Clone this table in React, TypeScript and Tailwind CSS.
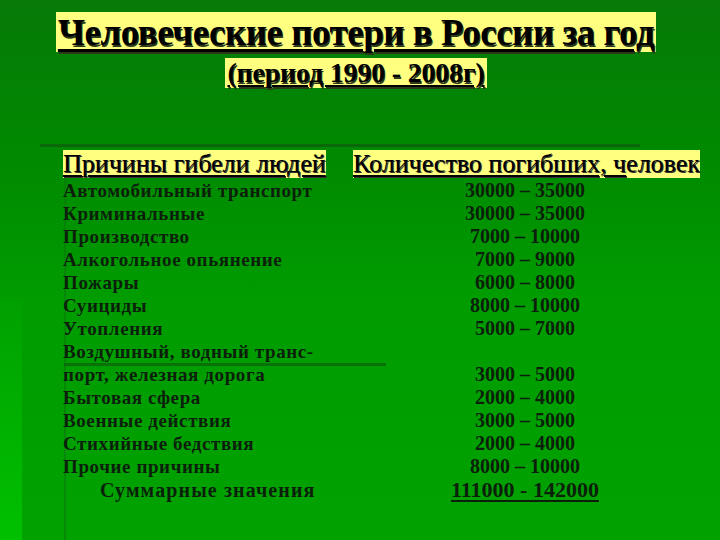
import React from "react";

const causes = [
  "Автомобильный транспорт",
  "Криминальные",
  "Производство",
  "Алкогольное опьянение",
  "Пожары",
  "Суициды",
  "Утопления",
  "Воздушный, водный транс-",
  "порт, железная дорога",
  "Бытовая сфера",
  "Военные действия",
  "Стихийные бедствия",
  "Прочие причины",
];

const numbers = [
  "30000 – 35000",
  "30000 – 35000",
  "7000 – 10000",
  "7000 – 9000",
  "6000 – 8000",
  "8000 – 10000",
  "5000 – 7000",
  "",
  "3000 – 5000",
  "2000 – 4000",
  "3000 – 5000",
  "2000 – 4000",
  "8000 – 10000",
];

export default function App() {
  return (
    <div
      className="relative w-[720px] h-[540px] overflow-hidden bg-[linear-gradient(180deg,#077a07_0%,#008a00_30%,#009c00_55%,#00a200_100%)] text-[#0b1f0b]"
      style={{ fontFamily: '"Liberation Serif", "Times New Roman", serif' }}
    >
      <div className="absolute left-0 top-[300px] w-[22px] h-[240px] bg-[linear-gradient(180deg,#00a000,#00c000)]" />
      <div className="absolute left-[64px] top-[150px] w-[2px] h-[390px] bg-[#0a7a0a] opacity-60" />
      <div className="absolute left-[40px] top-[144px] w-[600px] h-[3px] bg-[#0b600b] opacity-80" />
      <div className="absolute left-[64px] top-[363px] w-[322px] h-[3px] bg-[#0b600b] opacity-70" />

      <div className="relative flex flex-col items-center pt-[12px] pr-[8px]">
        <div className="bg-[#ffff80] px-[2px] h-[40px] flex items-center">
          <span className="text-[37px] font-bold leading-none underline decoration-[3px] underline-offset-[4px] text-black [text-shadow:1px_2px_0_#2a3a1a] tracking-[-0.5px]">
            Человеческие потери в России за год
          </span>
        </div>
        <div className="mt-[6px] bg-[#ffff80] px-[2px] h-[30px] flex items-center">
          <span className="text-[28px] font-bold leading-none underline decoration-[2px] underline-offset-[3px] text-black [text-shadow:1px_2px_0_#2a3a1a] tracking-[-0.2px]">
            (период 1990 - 2008г)
          </span>
        </div>
      </div>

      <div className="relative mt-[62px] grid grid-cols-[290px_344px] pl-[63px]">
        <div className="flex flex-col">
          <div className="h-[28px] flex items-center">
            <span className="bg-[#ffff80] text-black text-[26px] leading-[28px] underline decoration-[2px] underline-offset-[3px] whitespace-nowrap [text-shadow:1px_1px_0_#333]">
              Причины гибели людей
            </span>
          </div>
          <div className="mt-[1px] flex flex-col">
            {causes.map((c, i) => (
              <div
                key={i}
                className="h-[23px] leading-[23px] text-[19px] font-bold tracking-[0.6px] whitespace-nowrap"
              >
                {c}
              </div>
            ))}
            <div className="h-[24px] leading-[24px] text-[20px] font-bold tracking-[1.1px] pl-[37px] whitespace-nowrap">
              Суммарные значения
            </div>
          </div>
        </div>
        <div className="flex flex-col">
          <div className="h-[28px] flex items-center">
            <span className="bg-[#ffff80] text-black text-[26px] leading-[28px] whitespace-nowrap [text-shadow:1px_1px_0_#333]">
              <span className="underline decoration-[2px] underline-offset-[3px]">Количество погибших, ч</span>еловек
            </span>
          </div>
          <div className="mt-[1px] flex flex-col items-center">
            {numbers.map((n, i) => (
              <div key={i} className="h-[23px] leading-[23px] text-[20px] font-bold whitespace-nowrap">
                {n}
              </div>
            ))}
            <div className="h-[24px] leading-[24px] text-[22px] font-bold underline decoration-[2px] underline-offset-[3px] whitespace-nowrap">
              111000 - 142000
            </div>
          </div>
        </div>
      </div>
    </div>
  );
}
